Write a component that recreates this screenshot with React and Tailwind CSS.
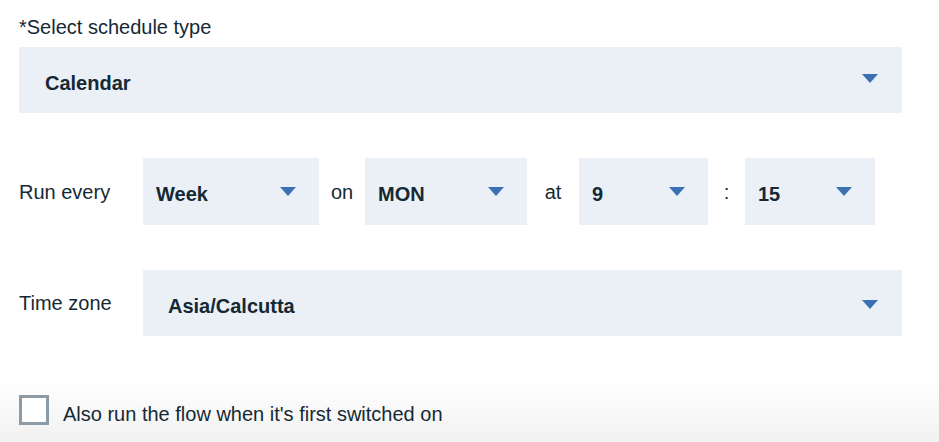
import React from "react";

const Caret = () => (
  <svg width="16" height="9" viewBox="0 0 16 9" className="shrink-0">
    <path d="M0 0 H16 L8 9 Z" fill="#3d70b2" />
  </svg>
);

const Select = ({ value, className }) => (
  <div className={`flex h-[67px] items-center justify-between bg-[#ebf0f7] pl-[13px] pr-[23px] ${className}`}>
    <span className="pt-[5px] text-[20px] font-semibold leading-6 text-[#152935]">{value}</span>
    <Caret />
  </div>
);

export default function App() {
  return (
    <div
      className="relative flex h-[442px] w-[939px] flex-col overflow-hidden bg-white text-[#152935]"
      style={{ fontFamily: '"Liberation Sans", Arial, sans-serif' }}
    >
      <div className="flex flex-col pl-[19px] pt-[15px]">
        <div className="text-[20px] leading-6">*Select schedule type</div>
        <div className="mt-[8px] flex h-[66px] w-[883px] items-center justify-between bg-[#ebf0f7] pl-[26px] pr-[24px]">
          <span className="pt-[5px] text-[20px] font-semibold leading-6">Calendar</span>
          <div className="-mt-[4px]">
            <Caret />
          </div>
        </div>

        <div className="mt-[45px] flex h-[67px] items-center">
          <div className="w-[124px] text-[20px] leading-6">Run every</div>
          <Select value="Week" className="w-[176px]" />
          <div className="w-[46px] text-center text-[20px] leading-6">on</div>
          <Select value="MON" className="w-[162px]" />
          <div className="w-[52px] text-center text-[20px] leading-6">at</div>
          <Select value="9" className="w-[129px]" />
          <div className="w-[37px] text-center text-[20px] leading-6">:</div>
          <Select value="15" className="w-[130px]" />
        </div>

        <div className="mt-[45px] flex h-[66px] items-center">
          <div className="w-[124px] text-[20px] leading-6">Time zone</div>
          <div className="flex h-[66px] w-[759px] items-center justify-between bg-[#ebf0f7] pl-[25px] pr-[24px]">
            <span className="pt-[5px] text-[20px] font-semibold leading-6">Asia/Calcutta</span>
            <div className="mt-[2px]">
              <Caret />
            </div>
          </div>
        </div>
      </div>

      <div className="mt-auto flex h-[70px] items-center bg-gradient-to-b from-white from-15% to-[#f1f1f1] pl-[19px] pt-[6px]">
        <div className="h-[30px] w-[30px] border-[3px] border-[#8d9ba6] bg-white" />
        <span className="ml-[14px] pt-[8px] text-[20px] leading-6">Also run the flow when it's first switched on</span>
      </div>
    </div>
  );
}
